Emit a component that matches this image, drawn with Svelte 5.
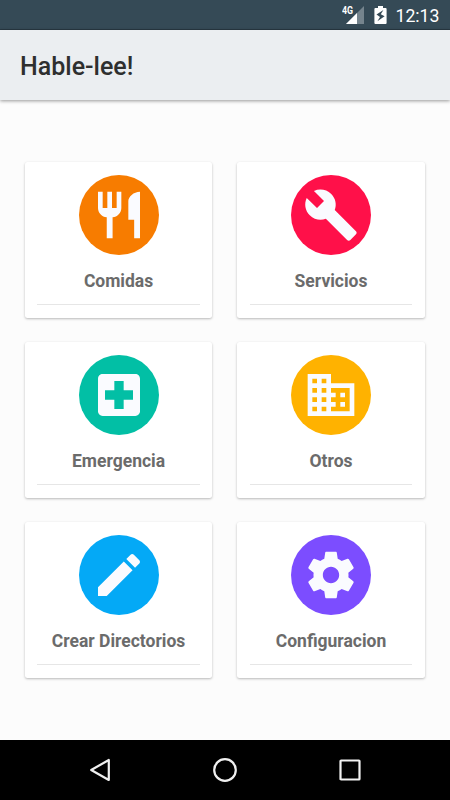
<script>
  const cards = [
    { label: 'Comidas', color: '#f77c00', path: 'M11 9H9V2H7v7H5V2H3v7c0 2.12 1.66 3.84 3.75 3.97V22h2.5v-9.03C11.34 12.84 13 11.12 13 9V2h-2v7zm5-3v8h2.5v8H21V2c-2.76 0-5 2.24-5 4z' },
    { label: 'Servicios', color: '#ff1049', path: 'M22.7 19l-9.1-9.1c.9-2.3.4-5-1.5-6.9-2-2-5-2.4-7.4-1.3L9 6 6 9 1.6 4.7C.4 7.1.9 10.1 2.9 12.1c1.9 1.9 4.6 2.4 6.9 1.5l9.1 9.1c.4.4 1 .4 1.4 0l2.3-2.3c.5-.4.5-1.1.1-1.4z' },
    { label: 'Emergencia', color: '#02bfa5', path: 'M19 3H5c-1.1 0-1.99.9-1.99 2L3 19c0 1.1.9 2 2 2h14c1.1 0 2-.9 2-2V5c0-1.1-.9-2-2-2zm-1 11h-4v4h-4v-4H6v-4h4V6h4v4h4v4z' },
    { label: 'Otros', color: '#ffb200', path: 'M12 7V3H2v18h20V7H12zM6 19H4v-2h2v2zm0-4H4v-2h2v2zm0-4H4V9h2v2zm0-4H4V5h2v2zm4 12H8v-2h2v2zm0-4H8v-2h2v2zm0-4H8V9h2v2zm0-4H8V5h2v2zm10 12h-8v-2h2v-2h-2v-2h2v-2h-2V9h8v10zm-2-8h-2v2h2v-2zm0 4h-2v2h2v-2z' },
    { label: 'Crear Directorios', color: '#04a9f6', path: 'M3 17.25V21h3.75L17.81 9.94l-3.75-3.75L3 17.25zM20.71 7.04c.39-.39.39-1.02 0-1.41l-2.34-2.34c-.39-.39-1.02-.39-1.41 0l-1.83 1.83 3.75 3.75 1.83-1.83z' },
    { label: 'Configuracion', color: '#7c4dff', path: 'M19.43 12.98c.04-.32.07-.64.07-.98s-.03-.66-.07-.98l2.11-1.65c.19-.15.24-.42.12-.64l-2-3.46c-.12-.22-.39-.3-.61-.22l-2.49 1c-.52-.4-1.08-.73-1.69-.98l-.38-2.65C14.46 2.18 14.25 2 14 2h-4c-.25 0-.46.18-.49.42l-.38 2.65c-.61.25-1.17.59-1.69.98l-2.49-1c-.23-.09-.49 0-.61.22l-2 3.46c-.13.22-.07.49.12.64l2.11 1.65c-.04.32-.07.65-.07.98s.03.66.07.98l-2.11 1.65c-.19.15-.24.42-.12.64l2 3.46c.12.22.39.3.61.22l2.49-1c.52.4 1.08.73 1.69.98l.38 2.65c.03.24.24.42.49.42h4c.25 0 .46-.18.49-.42l.38-2.65c.61-.25 1.17-.59 1.69-.98l2.49 1c.23.09.49 0 .61-.22l2-3.46c.12-.22.07-.49-.12-.64l-2.11-1.65zM12 15.5c-1.93 0-3.5-1.57-3.5-3.5s1.57-3.5 3.5-3.5 3.5 1.57 3.5 3.5-1.57 3.5-3.5 3.5z' }
  ];
</script>

<div class="screen">
  <div class="status">
    <div class="signal">
      <span class="net">4G</span>
      <svg width="18" height="18" viewBox="0 0 18 18">
        <path d="M18 0v18H0z" fill="#75848d" />
        <path d="M11 7v11H0z" fill="#fff" />
      </svg>
    </div>
    <svg class="battery" width="13" height="18" viewBox="0 0 13 18">
      <path fill="#fff" fill-rule="evenodd" d="M4 0h5v2h2.6q1 0 1 1v14q0 1-1 1H1.4q-1 0-1-1V3q0-1 1-1H4zM9.4 4L2.5 8.6l3.5 2.3-2.6 4.4 7.2-5.1-3.8-2z" />
    </svg>
    <span class="clock">12:13</span>
  </div>

  <header><h1>Hable-lee!</h1></header>

  <main>
    {#each cards as card}
      <section class="card">
        <div class="circle" style="background: {card.color}">
          <svg width="56" height="56" viewBox="0 0 24 24"><path d={card.path} fill="#fafbff" /></svg>
        </div>
        <div class="label">{card.label}</div>
        <div class="divider"></div>
      </section>
    {/each}
  </main>

  <nav>
    <svg width="24" height="26" viewBox="0 0 24 26"><path d="M20.8 3v20L3.2 13z" /></svg>
    <svg width="24" height="26" viewBox="0 0 24 26"><circle cx="12" cy="13" r="10.8" /></svg>
    <svg width="24" height="26" viewBox="0 0 24 26"><rect x="2.5" y="3.5" width="19" height="19" rx="0.6" /></svg>
  </nav>
</div>

<style>
  .screen {
    width: 450px;
    height: 800px;
    display: flex;
    flex-direction: column;
    background: #fcfcfc;
    font-family: Roboto, "Liberation Sans", sans-serif;
    overflow: hidden;
  }
  .status {
    height: 30px;
    flex: none;
    box-sizing: border-box;
    padding-right: 10.5px;
    display: flex;
    justify-content: flex-end;
    align-items: center;
    background: #354a56;
    border-bottom: 1px solid #293943;
    color: #fff;
  }
  .signal {
    position: relative;
    width: 18px;
    height: 18px;
    margin-right: 10px;
  }
  .signal svg, .battery, nav svg, .circle svg { display: block; }
  .net {
    position: absolute;
    left: -4.5px;
    top: -1px;
    font-size: 10.5px;
    line-height: 11px;
    font-weight: 700;
    transform: scaleX(0.84);
    transform-origin: left;
  }
  .clock {
    margin-left: 8px;
    font-size: 17.7px;
    line-height: 20px;
    padding-top: 2px;
  }
  header {
    height: 70px;
    flex: none;
    display: flex;
    align-items: center;
    padding-left: 20px;
    background: #ebeef1;
    box-shadow: 0 1px 3.5px rgba(0, 0, 0, 0.4);
  }
  h1 {
    margin: 0;
    padding-top: 3px;
    font-size: 25px;
    line-height: 30px;
    font-weight: 500;
    color: #2e2f2f;
  }
  main {
    flex: 1;
    display: grid;
    grid-template-columns: 187.5px 187.5px;
    grid-auto-rows: 155.5px;
    gap: 24.5px 25px;
    align-content: start;
    padding: 62px 25px 0 24.8px;
  }
  .card {
    box-sizing: border-box;
    padding: 13px 12.5px 12px;
    background: #fff;
    border-radius: 2.5px;
    box-shadow: 0 1px 2.5px rgba(0, 0, 0, 0.27);
    display: flex;
    flex-direction: column;
    align-items: center;
  }
  .circle {
    width: 80px;
    height: 80px;
    flex: none;
    border-radius: 50%;
    display: flex;
    align-items: center;
    justify-content: center;
  }
  .label {
    margin-top: 15.5px;
    font-size: 17.5px;
    line-height: 21px;
    font-weight: 700;
    color: #6b6b6b;
    white-space: nowrap;
  }
  .divider {
    width: 100%;
    height: 1px;
    margin-top: 12.5px;
    background: #e6e6e6;
  }
  nav {
    height: 60px;
    flex: none;
    display: flex;
    align-items: center;
    justify-content: space-between;
    padding: 0 88px;
    background: #000;
  }
  nav path, nav circle, nav rect {
    fill: none;
    stroke: #f0f0f0;
    stroke-width: 2.2;
    stroke-linejoin: round;
  }
</style>
